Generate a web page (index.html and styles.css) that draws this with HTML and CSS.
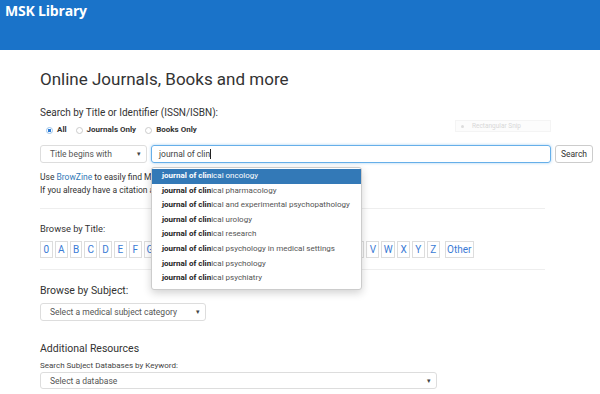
FILE: index.html
```html
<!DOCTYPE html>
<html lang="en">
<head>
  <meta charset="UTF-8" />
  <title>MSK Library - Online Journals</title>
  <link rel="stylesheet" href="styles.css">
</head>
<body>
  <div class="topbar">
    <div class="brand">MSK Library</div>
  </div>

  <div class="main">
    <h1 class="page-title">Online Journals, Books and more</h1>

    <div class="field-label">Search by Title or Identifier (ISSN/ISBN):</div>
    <div class="radios">
      <label class="radio"><span class="dot checked"></span>All</label>
      <label class="radio"><span class="dot"></span>Journals Only</label>
      <label class="radio"><span class="dot"></span>Books Only</label>
    </div>

    <div class="search-row">
      <div class="select narrow">Title begins with <span class="caret">&#9662;</span></div>
      <div class="search-box">
        <div class="input">journal of clin<span class="cursor"></span></div>
        <ul class="suggest">
          <li class="active"><b>journal of clin</b>ical oncology</li>
          <li><b>journal of clin</b>ical pharmacology</li>
          <li><b>journal of clin</b>ical and experimental psychopathology</li>
          <li><b>journal of clin</b>ical urology</li>
          <li><b>journal of clin</b>ical research</li>
          <li><b>journal of clin</b>ical psychology in medical settings</li>
          <li><b>journal of clin</b>ical psychology</li>
          <li><b>journal of clin</b>ical psychiatry</li>
        </ul>
      </div>
      <button class="btn">Search</button>
    </div>

    <p class="note">Use <a href="#">BrowZine</a> to easily find MSK journals and articles.<br>If you already have a citation and need the full text, use Citation Linker.</p>

    <hr class="rule">

    <div class="field-label browse">Browse by Title:</div>
    <div class="letters">
      <a href="#">0</a><a href="#">A</a><a href="#">B</a><a href="#">C</a><a href="#">D</a><a href="#">E</a><a href="#">F</a><a href="#">G</a><a href="#">H</a><a href="#">I</a><a href="#">J</a><a href="#">K</a><a href="#">L</a><a href="#">M</a><a href="#">N</a><a href="#">O</a><a href="#">P</a><a href="#">Q</a><a href="#">R</a><a href="#">S</a><a href="#">T</a><a href="#">U</a><a href="#">V</a><a href="#">W</a><a href="#">X</a><a href="#">Y</a><a href="#">Z</a><a href="#" class="other">Other</a>
    </div>

    <hr class="rule second">

    <h2 class="section">Browse by Subject:</h2>
    <div class="select subject">Select a medical subject category <span class="caret">&#9662;</span></div>

    <h2 class="section extra">Additional Resources</h2>
    <div class="small-label">Search Subject Databases by Keyword:</div>
    <div class="select database">Select a database <span class="caret">&#9662;</span></div>
  </div>

  <div class="snip"><span class="snip-icon"></span>Rectangular Snip</div>
</body>
</html>
```

FILE: styles.css
```css
body {
  margin: 0;
  font-family: Roboto, "Liberation Sans", sans-serif;
  color: #333;
  background: #fff;
}

.topbar {
  height: 50px;
  background: #1a73c9;
}
.brand {
  font-family: "Open Sans", sans-serif;
  font-weight: 700;
  font-size: 14px;
  color: #fff;
  padding: 1px 0 0 5px;
  letter-spacing: -0.2px;
}

.main {
  padding: 0 7px 0 40px;
}

.page-title {
  font-size: 17px;
  font-weight: 400;
  margin: 18px 0 0;
  line-height: 22px;
}

.field-label {
  font-size: 10px;
  margin-top: 16px;
  line-height: 14px;
}
.field-label.browse {
  font-size: 9.3px;
  margin-top: 13px;
}

.radios {
  display: flex;
  gap: 9px;
  margin-top: 4px;
  padding-left: 6px;
  font-size: 8px;
  font-weight: 700;
  line-height: 12px;
}
.radio {
  display: flex;
  align-items: center;
  gap: 4px;
}
.dot {
  width: 5px;
  height: 5px;
  border-radius: 50%;
  border: 1px solid #ccc;
}
.dot.checked {
  border-color: #9cc3ea;
  background: radial-gradient(circle, #2b7bd6 45%, #fff 55%);
}

.search-row {
  display: flex;
  gap: 4px;
  margin-top: 9px;
  height: 18px;
}
.select {
  box-sizing: border-box;
  height: 18px;
  border: 1px solid #ddd;
  border-radius: 3px;
  font-size: 8.5px;
  color: #555;
  padding: 0 0 0 9px;
  display: flex;
  align-items: center;
  position: relative;
}
.caret {
  position: absolute;
  right: 5px;
  font-size: 7px;
  color: #444;
}
.narrow { width: 107px; }

.search-box {
  position: relative;
  width: 400px;
}
.input {
  box-sizing: border-box;
  height: 18px;
  border: 1px solid #66afe9;
  border-radius: 3px;
  box-shadow: 0 0 3px rgba(102,175,233,.6);
  font-size: 8.5px;
  color: #444;
  padding-left: 7px;
  display: flex;
  align-items: center;
}
.cursor {
  display: inline-block;
  width: 1px;
  height: 10px;
  background: #222;
}

.suggest {
  position: absolute;
  top: 22px;
  left: 0;
  width: 209px;
  margin: 0;
  padding: 1px 0 3px;
  list-style: none;
  background: #fff;
  border: 1px solid #ccc;
  border-radius: 3px;
  box-shadow: 0 3px 8px rgba(0,0,0,.18);
  font-size: 8px;
  color: #555;
  z-index: 2;
}
.suggest li {
  height: 14.6px;
  line-height: 14.6px;
  padding-left: 10px;
  white-space: nowrap;
}
.suggest b { color: #222; }
.suggest .active {
  background: #3379b7;
  color: #fff;
}
.suggest .active b { color: #fff; }

.btn {
  width: 38px;
  height: 18px;
  border: 1px solid #ccc;
  border-radius: 3px;
  background: #fff;
  font-family: Roboto, sans-serif;
  font-size: 8.5px;
  color: #333;
  padding: 0;
}

.note {
  font-size: 8.5px;
  line-height: 13px;
  margin: 8px 0 0;
}
.note a {
  color: #337ab7;
  text-decoration: none;
}

.rule {
  width: 505px;
  margin: 11px 0 0;
  border: 0;
  border-top: 1px solid #eee;
}

.letters {
  display: flex;
  gap: 2px;
  margin-top: 5px;
}
.letters a {
  box-sizing: border-box;
  height: 17px;
  min-width: 12.8px;
  padding: 0 1.5px;
  border: 1px solid #ddd;
  font-size: 10px;
  line-height: 15px;
  color: #3a7bd5;
  text-align: center;
  text-decoration: none;
}
.letters .other {
  margin-left: 3px;
  padding: 0 1.5px;
}

.section {
  font-size: 10.5px;
  font-weight: 400;
  margin: 13px 0 0;
  line-height: 16px;
}
.subject {
  width: 166px;
  margin-top: 4px;
}
.extra { margin-top: 20px; }

.small-label {
  font-size: 8px;
  color: #444;
  margin-top: 3px;
  line-height: 11px;
}
.database {
  width: 397px;
  height: 17px;
  margin-top: 1px;
}

.snip {
  position: absolute;
  left: 455px;
  top: 120px;
  width: 96px;
  height: 12px;
  border: 1px solid #f4f4f4;
  background: #fcfcfc;
  color: #d8d8d8;
  font-size: 6.5px;
  display: flex;
  align-items: center;
  gap: 8px;
  box-sizing: border-box;
  padding-left: 5px;
}
.snip-icon {
  width: 3px;
  height: 3px;
  border-radius: 50%;
  background: #ddd;
}
```
